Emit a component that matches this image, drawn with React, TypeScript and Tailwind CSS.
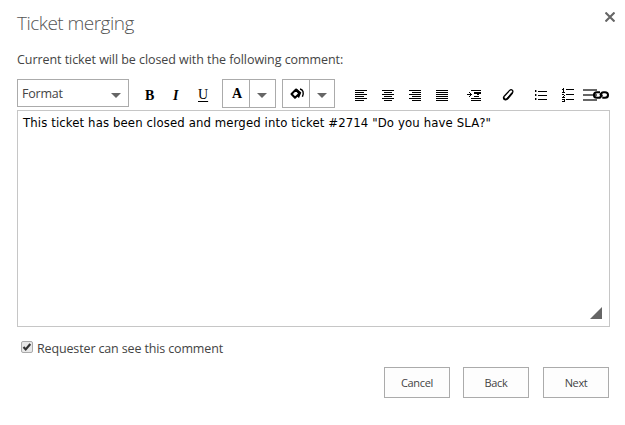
import type { ReactNode } from "react";

const Icon = ({ w, h = 16, className, children }: { w: number; h?: number; className?: string; children: ReactNode }) => (
  <svg width={w} height={h} viewBox={`0 0 ${w} ${h}`} className={`shrink-0 ${className ?? ""}`} shapeRendering="crispEdges">
    {children}
  </svg>
);

const Caret = () => (
  <svg width="10" height="5" viewBox="0 0 10 5" className="shrink-0">
    <path d="M0 0h10L5 5z" fill="#666" />
  </svg>
);

// Each row is [start, length] of one text line
const AlignIcon = ({ rows, className }: { rows: number[][]; className: string }) => (
  <Icon w={12} h={11} className={className}>
    {rows.map(([x, w], i) => (
      <rect key={i} x={x} y={i * 2} width={w} height="1" fill="#000" />
    ))}
  </Icon>
);

const left = [[0, 12], [0, 9], [0, 12], [0, 9], [0, 12], [0, 9]];
const center = [[0, 12], [2, 8], [0, 12], [2, 8], [0, 12], [2, 8]];
const right = [[0, 12], [3, 9], [0, 12], [3, 9], [0, 12], [3, 9]];
const full = [[0, 12], [0, 12], [0, 12], [0, 12], [0, 12], [0, 12]];

const Btn = ({ children, className }: { children: string; className?: string }) => (
  <button className={`h-[31px] w-[66px] border border-[#ababab] bg-[#fdfdfd] pt-px text-[11px] tracking-[-0.35px] text-[#444] ${className ?? ""}`}>
    {children}
  </button>
);

export default function App() {
  return (
    <div className="h-[425px] w-[625px] overflow-hidden bg-white pl-[17px] font-['Open_Sans',sans-serif] text-[13px] text-[#444]">
      <header className="flex h-[45px] items-start justify-between pr-[10px]">
        <h1 className="pt-[10px] text-[19px] leading-[26px] font-light tracking-[-0.52px] whitespace-nowrap text-[#555]">Ticket merging</h1>
        <button aria-label="Close" className="mt-[12px]">
          <svg width="10" height="10" viewBox="0 0 10 10" className="block">
            <path d="M0.5 0.5l9 9M9.5 0.5l-9 9" stroke="#666" strokeWidth="2.1" />
          </svg>
        </button>
      </header>
      <p className="h-[34px] pt-[5px] text-[12.5px] leading-[20px] tracking-[-0.06px] whitespace-nowrap">Current ticket will be closed with the following comment:</p>

      <div className="flex h-[31px] w-[593px] items-start">
        <div className="flex h-[28px] w-[112px] shrink-0 items-center justify-between border border-[#ababab] pr-[7px] pl-[4px]">
          <span className="pt-[2px] text-[12.5px] tracking-[-0.2px]">Format</span>
          <span className="pt-[5px]"><Caret /></span>
        </div>
        <span className="ml-[16px] w-[11px] pt-[7px] font-['Liberation_Serif',serif] text-[14px] leading-[20px] font-bold text-black">B</span>
        <span className="ml-[17px] w-[8px] pt-[7px] font-['Liberation_Serif',serif] text-[14px] leading-[20px] font-bold text-black italic">I</span>
        <span className="ml-[17px] w-[11px] pt-[6px] font-['Liberation_Serif',serif] text-[14px] leading-[20px] text-black underline underline-offset-2">U</span>
        <div className="ml-[13px] flex h-[29px] w-[54px] shrink-0 border border-[#ababab]">
          <span className="flex w-[27px] justify-center border-r border-[#ababab] pt-[4px] pl-[2px] font-['Liberation_Serif',serif] text-[14px] leading-[20px] font-bold text-black">A</span>
          <span className="flex flex-1 items-start justify-center pt-[13px] pr-px"><Caret /></span>
        </div>
        <div className="ml-[6px] flex h-[29px] w-[53px] shrink-0 border border-[#ababab]">
          <span className="flex w-[27px] border-r border-[#ababab] pt-[8px] pl-[7px]">
            <svg width="15" height="12" viewBox="0 0 15 12" className="block shrink-0">
              <path d="M6 1.5L1.5 6l3.5 3.8L9.3 5.6z" fill="none" stroke="#000" strokeWidth="2" strokeLinejoin="round" />
              <path d="M6.5 0.6L11.3 4.6 9 10 7 8.5 8.5 5z" fill="#000" />
              <path d="M10 1c3 .6 4.2 3.4 2.4 7.8" fill="none" stroke="#000" strokeWidth="1.4" />
            </svg>
          </span>
          <span className="flex flex-1 items-start justify-center pt-[13px]"><Caret /></span>
        </div>

        <AlignIcon rows={left} className="mt-[11px] ml-[20px]" />
        <AlignIcon rows={center} className="mt-[11px] ml-[15px]" />
        <AlignIcon rows={right} className="mt-[11px] ml-[15px]" />
        <AlignIcon rows={full} className="mt-[11px] ml-[15px]" />

        <Icon w={14} h={11} className="mt-[11px] ml-[19px]">
          <path d="M4 0h10v1H4zM7 2h7v2H7zM10 4h2v1h-2zM7 6h5v1H7zM4 8h10v1H4zM4 10h10v1H4z" fill="#000" />
          <path d="M0 4h5v1H0zM3 3h1v3H3zM2 2h1v1H2zM2 6h1v1H2z" fill="#000" />
        </Icon>
        <svg width="13" height="14" viewBox="0 0 13 14" className="mt-[9px] ml-[21px] shrink-0">
          <path d="M2.2 8.2L7.6 2.4C9.5.7 12 2.7 10.2 5L5 10.7c-2 1.7-4.5-.4-2.8-2.5z" fill="none" stroke="#000" strokeWidth="1.3" />
          <path d="M1.6 9.5c.4 2.5 2.7 2.7 4.2 1L10.3 5" fill="none" stroke="#000" strokeWidth="1.8" />
        </svg>
        <Icon w={12} h={11} className="mt-[11px] ml-[20px]">
          <path d="M0 0h1v2H0zM0 4h1v2H0zM0 8h1v2H0zM3 1h9v1H3zM3 5h9v1H3zM3 9h9v1H3z" fill="#000" />
          <path d="M1 0h1v2H1zM1 4h1v2H1zM1 8h1v2H1z" fill="#999" />
        </Icon>
        <Icon w={12} h={15} className="mt-[9px] ml-[15px]">
          <path d="M4 1h8v1H4zM4 6h8v1H4zM4 11h8v1H4z" fill="#000" />
          <path d="M1 0h1v4H1zM0 1h1v1H0zM0 4h3v1H0zM0 6h2v1H0zM2 7h1v1H2zM1 8h1v1H1zM0 9h3v1H0zM0 11h3v1H0zM2 12h1v1H2zM0 13h3v1H0z" fill="#000" />
        </Icon>
        <Icon w={27} h={13} className="mt-[10px] ml-[9px]">
          <path d="M0 0h14v2H0zM0 5h14v2H0zM0 10h14v2H0z" fill="#666" />
          <g fill="none" stroke="#000" strokeWidth="2.1" shapeRendering="geometricPrecision">
            <path d="M17 3.2h-3c-4 0-4 5.6 0 5.6h1.6c1.6 0 2.4-1 2.4-2.4 0-.8-.5-1.4-1.2-1.7" />
            <path d="M19.3 8.8H22c4 0 4-5.6 0-5.6h-1.4c-1.6 0-2.4 1-2.4 2.4 0 .8.6 1.4 1.3 1.7" />
          </g>
        </Icon>
      </div>

      <div className="flex h-[217px] w-[593px] flex-col justify-between border border-[#c6c6c6] pr-[7px] pb-[7px] pl-[5px]">
        <p className="pt-[2px] font-['DejaVu_Sans_Condensed','DejaVu_Sans',sans-serif] text-[13px] leading-[19px] tracking-[0.12px] whitespace-nowrap text-black">
          This ticket has been closed and merged into ticket #2714 "Do you have SLA?"
        </p>
        <svg width="12" height="12" viewBox="0 0 12 12" className="self-end">
          <path d="M12 0v12H0z" fill="#666" />
        </svg>
      </div>

      <label className="flex h-[40px] items-start pl-[4px]">
        <span className="mt-[14px] flex h-[12px] w-[12px] shrink-0 items-center justify-center rounded-[2px] border border-[#aaa] bg-[#e8e8e8]">
          <svg width="10" height="10" viewBox="0 0 10 10" className="shrink-0">
            <path d="M1.5 5l2.2 2.4L8.3 2" fill="none" stroke="#333" strokeWidth="2.2" />
          </svg>
        </span>
        <span className="pt-[12px] pl-[4px] text-[12.5px] leading-[20px] tracking-[-0.14px] whitespace-nowrap">Requester can see this comment</span>
      </label>

      <div className="flex pl-[367px]">
        <Btn>Cancel</Btn>
        <Btn className="ml-[13px]">Back</Btn>
        <Btn className="ml-[14px]">Next</Btn>
      </div>
    </div>
  );
}
